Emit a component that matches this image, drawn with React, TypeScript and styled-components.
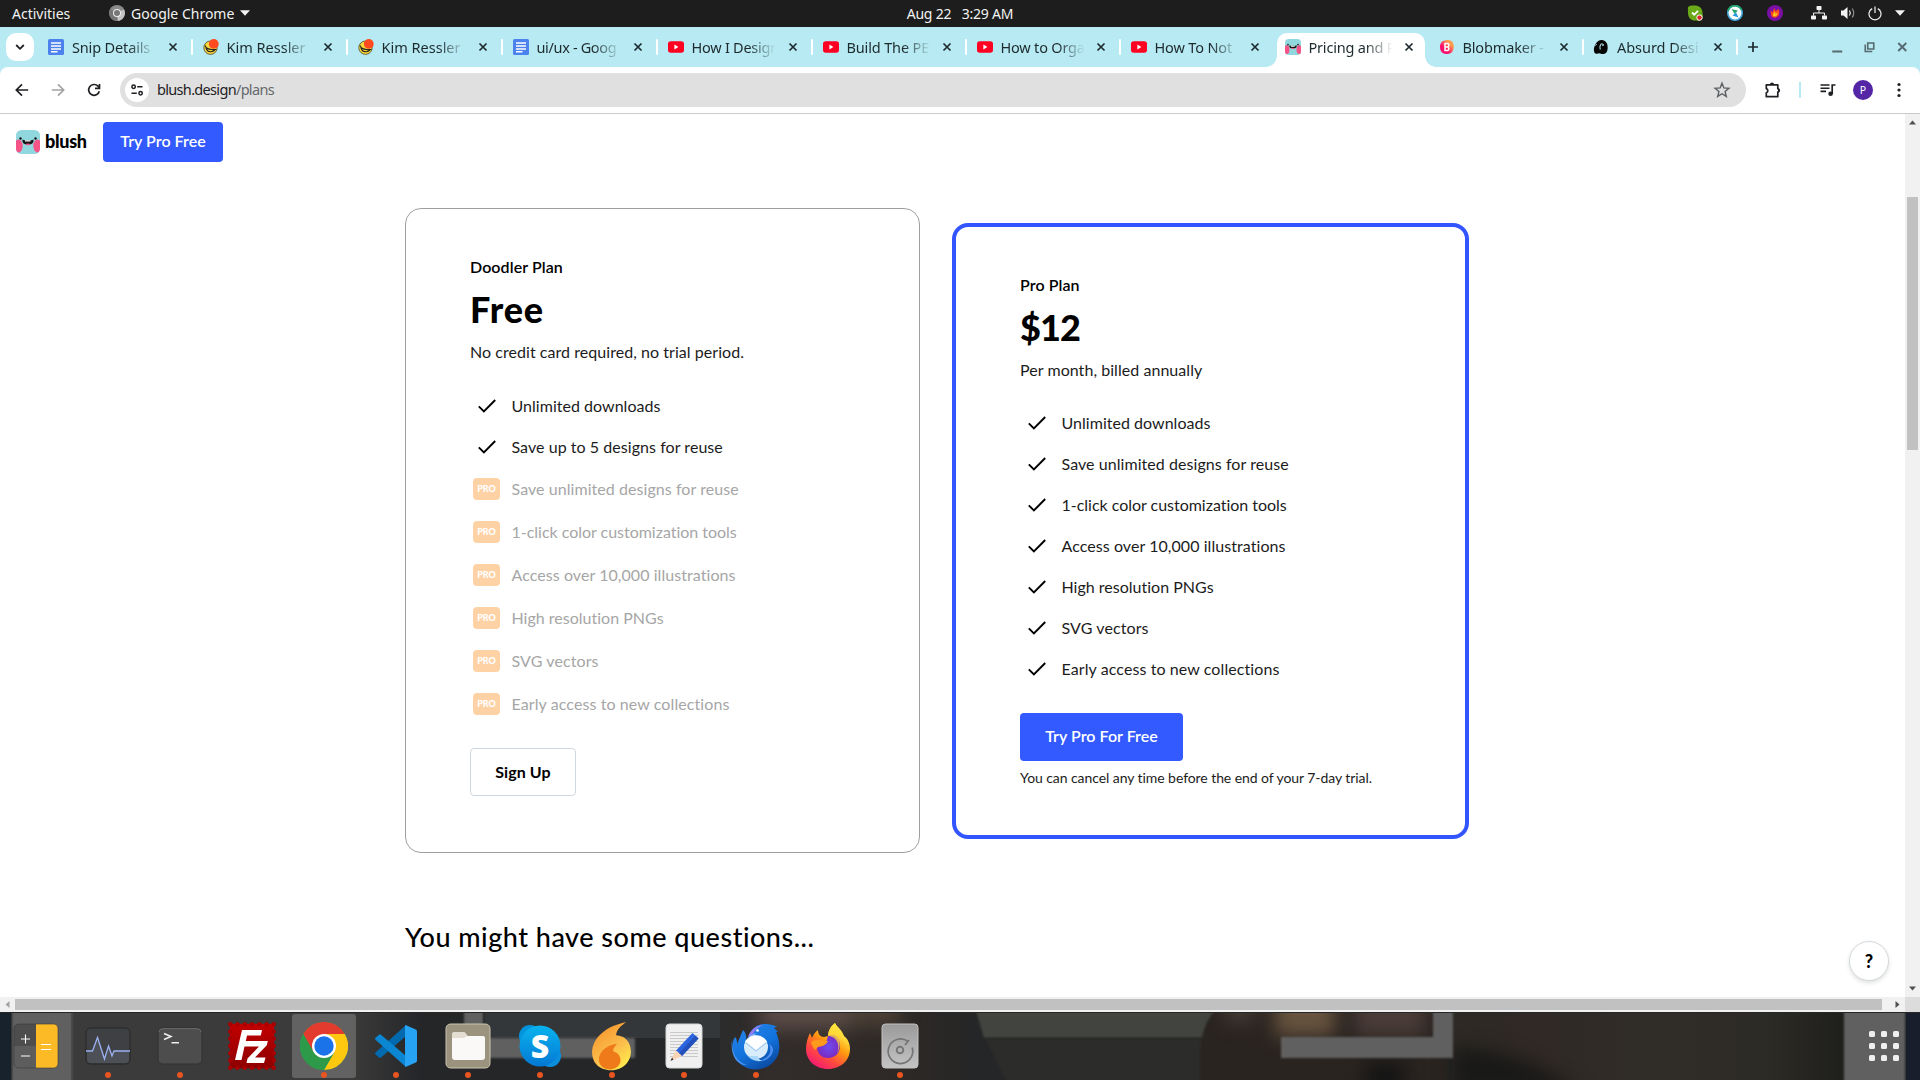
import React from "react";
import styled, { createGlobalStyle, css } from "styled-components";

const UI = `"Noto Sans", "Open Sans", sans-serif`;
const BRAND = `Lato, "Open Sans", sans-serif`;

const GlobalStyle = createGlobalStyle`
  * { box-sizing: border-box; }
  html, body { margin: 0; padding: 0; background: #fff; overflow: hidden; }
  button { font: inherit; border: 0; background: none; padding: 0; margin: 0; color: inherit; }
  svg { display: block; flex: none; }
`;

const Screen = styled.div`
  width: 1920px;
  height: 1080px;
  display: flex;
  flex-direction: column;
  overflow: hidden;
  background: #fff;
`;

/* ---------- system bar ---------- */
const SystemBar = styled.header`
  height: 27px;
  flex: none;
  display: grid;
  grid-template-columns: 1fr auto 1fr;
  align-items: center;
  padding-bottom: 1px;
  background: #1d1d1d;
  color: #f2f2f2;
  font: 400 14px/25px ${UI};
  white-space: pre;
`;
const SystemLeft = styled.div`
  display: flex;
  align-items: center;
  padding-left: 12px;
`;
const SystemLabel = styled.span<{ $w: number; $ls?: number }>`
  width: ${(p) => p.$w}px;
  letter-spacing: ${(p) => p.$ls ?? 0}px;
`;
const AppBadge = styled.span`
  display: flex;
  margin: 0 6px 0 35px;
`;
const Clock = styled.time`
  letter-spacing: -0.2px;
`;
const Tray = styled.div`
  display: flex;
  justify-content: flex-end;
  align-items: center;
  padding-right: 15px;
`;
const TraySlot = styled.span<{ $w: number }>`
  width: ${(p) => p.$w}px;
  display: flex;
  justify-content: center;
`;

/* ---------- tab strip ---------- */
const TabStrip = styled.nav`
  height: 40px;
  flex: none;
  display: flex;
  background: #b7eaf2;
  padding: 6px 0 0 6px;
`;
const TabSearch = styled.button`
  width: 28px;
  height: 28px;
  border-radius: 10px;
  background: #fff;
  display: flex;
  align-items: center;
  justify-content: center;
`;
const Tabs = styled.div`
  display: flex;
  margin-left: 3.5px;
`;
const Tab = styled.div<{ $w: number; $active?: boolean; $line?: boolean }>`
  position: relative;
  width: ${(p) => p.$w}px;
  height: 34px;
  display: flex;
  align-items: center;
  padding: 0 13px 6px 10.5px;
  font: 400 14.5px/20px ${UI};
  color: #1d2a2e;
  ${(p) =>
    p.$line &&
    css`
      &::after {
        content: "";
        position: absolute;
        right: -1px;
        top: 6px;
        width: 2px;
        height: 16px;
        border-radius: 1px;
        background: #fff;
      }
    `}
  ${(p) =>
    p.$active &&
    css`
      z-index: 1;
      background: #fff;
      border-radius: 10px 10px 0 0;
      width: 148.5px;
      margin: 0 3px;
      padding-left: 8px;
      padding-right: 10px;
      &::before,
      &::after {
        content: "";
        position: absolute;
        bottom: 0;
        width: 11px;
        height: 11px;
      }
      &::before {
        left: -11px;
        background: radial-gradient(circle at 0 0, transparent 10.5px, #fff 11px);
      }
      &::after {
        right: -11px;
        background: radial-gradient(circle at 100% 0, transparent 10.5px, #fff 11px);
      }
    `}
`;
const TabTitle = styled.span<{ $ls?: number }>`
  flex: none;
  width: 88px;
  margin-left: 8px;
  white-space: nowrap;
  letter-spacing: ${(p) => p.$ls ?? -0.15}px;
  mask-image: linear-gradient(90deg, #000 64%, transparent 95%);
`;
const TabClose = styled.span`
  display: flex;
  margin-left: auto;
`;
const NewTab = styled.button`
  margin: 0 0 6px 6px;
  width: 20px;
  display: flex;
  align-items: center;
  justify-content: center;
`;
const WindowControls = styled.div`
  display: flex;
  margin-left: auto;
  padding: 0 2px 6px 0;
  color: #566a70;
  & > svg {
    width: 32.5px;
    height: 28px;
  }
`;

/* ---------- toolbar ---------- */
const ToolbarWrap = styled.div`
  background: #b7eaf2;
  height: 47px;
  flex: none;
`;
const Toolbar = styled.div`
  height: 47px;
  background: #fff;
  border-radius: 8px 8px 0 0;
  border-bottom: 1px solid #c9cacb;
  display: flex;
  align-items: center;
  padding-left: 4px;
  color: #1f2023;
`;
const ToolSlot = styled.button<{ $dim?: boolean; $w?: number }>`
  width: ${(p) => p.$w ?? 36}px;
  display: flex;
  justify-content: center;
  color: ${(p) => (p.$dim ? "#a3a3a3" : "#1f2023")};
`;
const Omnibox = styled.div`
  width: 1626px;
  height: 34px;
  margin-left: 8px;
  border-radius: 17px;
  background: #e0e0e0;
  display: flex;
  align-items: center;
  padding: 0 15px 0 5px;
  font: 400 14.5px/20px ${UI};
  letter-spacing: -0.68px;
  color: #1f2023;
`;
const SiteInfo = styled.span`
  width: 24px;
  height: 24px;
  border-radius: 50%;
  background: #fff;
  display: flex;
  align-items: center;
  justify-content: center;
  margin-right: 8px;
`;
const UrlHost = styled.span`
  margin-top: -2px;
`;
const UrlPath = styled.span`
  color: #65696c;
  margin: -2px auto 0 0;
`;
const ToolDivider = styled.span`
  width: 2px;
  height: 16px;
  background: #b7eaf2;
  margin-right: 8px;
`;
const Avatar = styled.span`
  width: 20px;
  height: 20px;
  border-radius: 50%;
  background: #5426a6;
  color: #fff;
  font: 400 10.5px/20px ${UI};
  text-align: center;
`;

/* ---------- viewport ---------- */
const Viewport = styled.div`
  height: 898px;
  flex: none;
  display: grid;
  grid-template-columns: 1fr 15px;
  grid-template-rows: 883px 15px;
`;
const Page = styled.main`
  background: #fff;
  font-family: ${BRAND};
  color: #000;
  position: relative;
  overflow: hidden;
  font-variant-ligatures: none;
`;
const VTrack = styled.div`
  background: #f1f1f1;
  display: flex;
  flex-direction: column;
  align-items: center;
  padding: 5px 0;
`;
const VThumb = styled.div`
  width: 11px;
  height: 253px;
  margin: 71px 0 auto;
  background: #c1c1c1;
`;
const HTrack = styled.div`
  background: #f1f1f1;
  display: flex;
  align-items: center;
  padding: 0 4px;
`;
const HThumb = styled.div`
  width: 1867px;
  height: 11px;
  margin: 0 auto 0 4px;
  background: #c1c1c1;
`;
const Corner = styled.div`
  background: #dcdcdc;
`;

const SiteNav = styled.div`
  display: flex;
  align-items: center;
  padding: 8px 16px 0;
`;
const Wordmark = styled.span`
  width: 58px;
  margin: -2px 0 0 5px;
  font: 900 18px/24px ${BRAND};
  letter-spacing: -0.3px;
`;
const PrimaryButton = styled.button<{ $w: number; $h: number; $mt?: number }>`
  width: ${(p) => p.$w}px;
  height: ${(p) => p.$h}px;
  margin-top: ${(p) => p.$mt ?? 0}px;
  padding-bottom: 2px;
  border-radius: 4px;
  background: #325aff;
  color: #fff;
  font: 600 16px/24px ${BRAND};
  letter-spacing: 0.03px;
  flex: none;
`;
const OutlineButton = styled.button`
  width: 106px;
  height: 48px;
  margin-top: 23px;
  border: 1px solid #cfd8dc;
  border-radius: 4px;
  background: #fff;
  color: #000;
  font: 700 16px/22px ${BRAND};
  letter-spacing: 0.1px;
  flex: none;
`;
const Plans = styled.section`
  display: flex;
  align-items: center;
  gap: 32px;
  margin: 46px 0 0 405px;
`;
const Card = styled.article<{ $featured?: boolean }>`
  display: flex;
  flex-direction: column;
  align-items: flex-start;
  border-radius: 16px;
  background: #fff;
  ${(p) =>
    p.$featured
      ? css`
          width: 517px;
          height: 616px;
          border: 4px solid #3355ff;
          padding: 46px 64px 0;
        `
      : css`
          width: 515px;
          height: 645px;
          border: 1px solid #9f9f9f;
          padding: 46px 64px 0;
        `}
`;
const PlanName = styled.h2`
  margin: 0;
  font: 600 16px/24px ${BRAND};
  letter-spacing: 0.08px;
`;
const Price = styled.div<{ $ls?: number }>`
  margin: 8px 0 -1px;
  font: 900 36px/44px ${BRAND};
  letter-spacing: ${(p) => p.$ls ?? 0}px;
`;
const Terms = styled.p`
  margin: 10px 0 0;
  font: 400 16px/24px ${BRAND};
  letter-spacing: 0.05px;
  color: #1c1c1c;
  white-space: nowrap;
`;
const Features = styled.ul`
  list-style: none;
  margin: 21px 0 0;
  padding: 0;
`;
const Feature = styled.li<{ $locked?: boolean }>`
  height: ${(p) => (p.$locked ? 43 : 41)}px;
  display: grid;
  grid-template-columns: 41.5px auto;
  align-items: center;
  font: 400 16px/24px ${BRAND};
  color: ${(p) => (p.$locked ? "#a6a6a6" : "#1c1c1c")};
  white-space: nowrap;
`;
const FeatureText = styled.span<{ $ls: number }>`
  letter-spacing: ${(p) => p.$ls}px;
`;
const CheckSlot = styled.span`
  padding-left: 8px;
`;
const ProBadge = styled.span`
  width: 27px;
  height: 22px;
  margin-left: 3px;
  border-radius: 4px;
  background: #ffd2a6;
  color: #fff;
  font: 900 9px/21px ${BRAND};
  text-align: center;
`;
const Note = styled.p`
  margin: 7px 0 0;
  font: 400 14px/20px ${BRAND};
  letter-spacing: -0.07px;
  color: #1c1c1c;
  white-space: nowrap;
`;
const Questions = styled.h2`
  margin: 66px 0 0 405px;
  font: 500 27px/36px ${BRAND};
  letter-spacing: 0.5px;
`;
const Help = styled.button`
  position: absolute;
  right: 16px;
  bottom: 16px;
  width: 40px;
  height: 40px;
  border: 1px solid #d3d9dd;
  border-radius: 50%;
  background: #fff;
  box-shadow: 0 2px 4px rgba(0, 0, 0, 0.12);
  font: 900 18px/38px ${BRAND};
  text-align: center;
`;

/* ---------- dock ---------- */
const Dock = styled.footer`
  position: relative;
  height: 68px;
  flex: none;
  display: flex;
  background: #2a2a29;
  overflow: hidden;
`;
const Wallpaper = styled.svg`
  position: absolute;
  left: 0;
  top: 0;
`;
const DockItem = styled.div<{ $active?: boolean; $running?: boolean }>`
  position: relative;
  width: 64px;
  height: 64px;
  margin: 2px 4px;
  border-radius: 3px;
  display: flex;
  align-items: center;
  justify-content: center;
  background: ${(p) => (p.$active ? "rgba(255,255,255,.2)" : "transparent")};
  ${(p) =>
    p.$running &&
    css`
      &::after {
        content: "";
        position: absolute;
        left: 29px;
        bottom: 0;
        width: 6px;
        height: 6px;
        border-radius: 50%;
        background: #e95420;
      }
    `}
`;
const AppsButton = styled.div`
  position: relative;
  display: grid;
  grid-template-columns: repeat(3, 6px);
  grid-auto-rows: 6px;
  gap: 6px;
  margin: 19px 21px 0 auto;
`;
const AppsDot = styled.i`
  border-radius: 1.5px;
  background: #efefef;
`;

/* ---------- icons ---------- */
const DocsIcon = () => (
  <svg width="16" height="16" viewBox="0 0 16 16">
    <rect width="16" height="16" rx="1.5" fill="#4c82ee" />
    <path d="M3 4h10M3 7h10M3 10h10M3 12.7h6.5" stroke="#fff" strokeWidth="1.6" />
  </svg>
);
const KimIcon = () => (
  <svg width="16" height="16" viewBox="0 0 16 16">
    <circle cx="7.5" cy="8.7" r="6.700" fill="#f7d83c" stroke="#3a3222" strokeWidth=".7" />
    <path d="M2 6.500c1 3.500 6 4.500 11.500 4M4 11.500c2.500 2 6 1.500 8-.5M3 8c0 2 1.500 4 3.500 4.500" fill="none" stroke="#2b2622" strokeWidth="1.100" />
    <circle cx="10.800" cy="4.900" r="4.900" fill="#ff4b1f" />
  </svg>
);
const YouTubeIcon = () => (
  <svg width="16" height="16" viewBox="0 0 16 16">
    <rect y="2.200" width="16" height="11.600" rx="2.800" fill="#ff0022" />
    <path d="M6.400 5.600v4.800l4-2.400z" fill="#fff" />
  </svg>
);
const BlushIcon = ({ size = 16 }: { size?: number }) => (
  <svg width={size} height={size} viewBox="0 0 24 24">
    <defs>
      <clipPath id={`face${size}`}>
        <rect width="24" height="24" rx="5.500" />
      </clipPath>
    </defs>
    <g clipPath={`url(#face${size})`}>
      <rect width="24" height="24" fill="#91d8de" />
      <ellipse cx="2.500" cy="16" rx="4.200" ry="6.500" fill="#f65487" />
      <ellipse cx="21.500" cy="16" rx="4.200" ry="6.500" fill="#f65487" />
      <path d="M6.500 9.500c1.800.8 3 1 5.500.700 2.500.3 3.700.1 5.500-.7.400 3.200-1 5-5.500 5s-5.900-1.800-5.500-5z" fill="#141414" />
      <path d="M9 10.300h5.500v1.300H9z" fill="#fff" />
      <path d="M9.500 14.200c1.300-.9 3.700-.9 5 0-.6 1.300-4.400 1.300-5 0z" fill="#f65487" />
      <circle cx="4.500" cy="8.500" r="1.200" fill="#141414" />
      <circle cx="19.500" cy="8.500" r="1.200" fill="#141414" />
    </g>
  </svg>
);
const BlobIcon = () => (
  <svg width="16" height="16" viewBox="0 0 16 16">
    <defs>
      <linearGradient id="blob" x1="0" y1="1" x2="1" y2="0">
        <stop offset=".35" stopColor="#fb0f6c" />
        <stop offset=".75" stopColor="#ff9f4d" />
      </linearGradient>
    </defs>
    <path d="M1 8C1 3.500 3.500 1.500 7 1.200 12 .6 14.800 3 14.800 7.500 14.800 12 12.500 15 8 15S1 12.500 1 8z" fill="url(#blob)" />
    <path d="M6 4.500v7h2.600a1.900 1.900 0 0 0 0-3.600H6h2.300a1.700 1.700 0 0 0 0-3.400z" fill="none" stroke="#fff" strokeWidth="1.500" />
  </svg>
);
const AbsurdIcon = () => (
  <svg width="16" height="16" viewBox="0 0 16 16">
    <path d="M2 6C4 2 7 .5 10 1.200c4 1 5 5 4.600 8.800-.3 3.500-2 5-4.600 5-2 0-2.500-.8-3.500-.8S4 15 2.500 14.500C.5 13.500.5 9 2 6z" fill="#050505" />
    <path d="M7.300 10.500C6.200 7.500 7.500 4.500 9.500 4.800" fill="none" stroke="#b7eaf2" strokeWidth="1.100" />
    <circle cx="10" cy="6" r=".9" fill="#b7eaf2" />
    <path d="M1.500 7l2.500-2" stroke="#b7eaf2" strokeWidth=".8" />
  </svg>
);
const CloseIcon = () => (
  <svg width="12" height="12" viewBox="0 0 12 12">
    <path d="M2.500 2.500l7 7M9.500 2.500l-7 7" stroke="#1d2a2e" strokeWidth="1.700" />
  </svg>
);
const Check = () => (
  <svg width="18" height="14" viewBox="0 0 18 14">
    <path d="M.8 7.300l5.100 5.200L17.200 1" fill="none" stroke="#000" strokeWidth="1.900" />
  </svg>
);
const ArrowIcon = ({ flip }: { flip?: boolean }) => (
  <svg width="20" height="20" viewBox="0 0 20 20" transform={flip ? "rotate(180)" : undefined}>
    <path d="M16.200 10H4.500M10 4.300L4.300 10l5.700 5.700" fill="none" stroke="currentColor" strokeWidth="1.700" />
  </svg>
);
const ReloadIcon = () => (
  <svg width="20" height="20" viewBox="0 0 20 20">
    <path d="M15.300 11.200A5.400 5.400 0 1 1 14 6.200l1.200 1.300" fill="none" stroke="currentColor" strokeWidth="1.700" />
    <path d="M15.500 4v4.400H11" fill="none" stroke="currentColor" strokeWidth="1.700" />
  </svg>
);
const TuneIcon = () => (
  <svg width="14" height="14" viewBox="0 0 14 14" fill="none" stroke="#1f2023" strokeWidth="1.500">
    <circle cx="3.600" cy="3.700" r="1.700" />
    <path d="M7.200 3.700h5.300M1.500 10.300h5.300" />
    <circle cx="10.600" cy="10.300" r="1.700" />
  </svg>
);
const StarIcon = () => (
  <svg width="18" height="18" viewBox="0 0 24 24">
    <path d="M12 3l2.500 6.200 6.700.5-5.100 4.300 1.600 6.500L12 17l-5.700 3.500 1.600-6.500-5.100-4.300 6.700-.5z" fill="none" stroke="#5c5f62" strokeWidth="1.900" />
  </svg>
);
const ExtensionIcon = () => (
  <svg width="20" height="20" viewBox="0 0 20 20">
    <path d="M3.300 4.800h11.500v4a1.700 1.700 0 0 1 0 3.200v4.700H3.300v-3.900a2.200 2.200 0 0 0 0-4.200z" fill="none" stroke="currentColor" strokeWidth="1.700" strokeLinejoin="round" />
    <path d="M6.900 4.500a2.100 2.100 0 0 1 4.200 0zM15 8.300a2.100 2.100 0 0 1 0 4.200z" fill="currentColor" />
  </svg>
);
const MediaIcon = () => (
  <svg width="20" height="20" viewBox="0 0 20 20">
    <path d="M2.500 5h9M2.500 8.200h9M2.500 11.400h5.500" stroke="currentColor" strokeWidth="1.600" />
    <path d="M17.500 5h-3.300v9" fill="none" stroke="currentColor" strokeWidth="1.700" />
    <circle cx="12.600" cy="13.700" r="2.300" fill="currentColor" />
  </svg>
);
const DotsIcon = () => (
  <svg width="20" height="20" viewBox="0 0 20 20" fill="currentColor">
    <circle cx="10" cy="4.500" r="1.600" />
    <circle cx="10" cy="10" r="1.600" />
    <circle cx="10" cy="15.500" r="1.600" />
  </svg>
);
const Caret = ({ w = 10 }: { w?: number }) => (
  <svg width={w} height="6" viewBox="0 0 10 6">
    <path d="M0 .3h10L5 5.800z" fill="#f2f2f2" />
  </svg>
);
const ScrollArrow = ({ turn, light }: { turn: number; light?: boolean }) => (
  <svg width="7" height="7" viewBox="0 0 7 7" transform={`rotate(${turn})`}>
    <path d="M0 5.500h7L3.500 1.500z" fill={light ? "#a3a3a3" : "#505050"} />
  </svg>
);

const GreyChrome = () => (
  <svg width="16" height="16" viewBox="0 0 16 16">
    <circle cx="8" cy="8" r="8" fill="#8b8b8b" />
    <path d="M8 8L15 4.500A8 8 0 0 1 9 16z" fill="#c4c4c4" />
    <path d="M8 8l-6.500-4A8 8 0 0 0 8 16z" fill="#757575" />
    <circle cx="8" cy="8" r="4" fill="#eee" />
    <circle cx="8" cy="8" r="3" fill="#777" />
  </svg>
);
const SkypeTray = () => (
  <svg width="16" height="16" viewBox="0 0 16 16">
    <path d="M1 5C0 1.500 3 0 6 .6c5-.8 10 2 9.500 8C17 13 13 17 9.500 15.500 3 16 .5 12 1 5z" fill="#6aa917" />
    <path d="M5 7.500l2.200 2.200L11 5.800" fill="none" stroke="#fff" strokeWidth="1.800" />
    <circle cx="12.500" cy="12.600" r="2.700" fill="#d9222a" stroke="#fff" strokeWidth="1" />
  </svg>
);
const SyncTray = () => (
  <svg width="16" height="16" viewBox="0 0 16 16">
    <circle cx="8" cy="8" r="7.200" fill="#fff" stroke="#45a9dc" strokeWidth="1.600" />
    <path d="M1 6a7.200 7.200 0 0 1 13.500-1" fill="none" stroke="#23a566" strokeWidth="1.700" />
    <path d="M4.500 4l6.500 1.800-3.500 3z" fill="#23a566" />
    <path d="M11.500 12.500L5.500 10.500 9 7.200z" fill="#2b9bd8" />
  </svg>
);
const FlameTray = () => (
  <svg width="16" height="16" viewBox="0 0 16 16">
    <circle cx="8" cy="8" r="8" fill="#7a0fa5" />
    <path d="M3.500 5.500c1.200.5 1.500 1.200 1.800 2L7.500 3l.8 3L12 4c0 3 1 4-.5 6.500C10 13 6 13.500 4.500 11c-1-1.700-.2-3-1-5.500z" fill="#ff4a1c" />
    <path d="M6 11c-.5-2 1-3 1.500-5 .5 1.500 1 2 1.200 3L10.500 7c.3 3-1 5.500-4.500 4z" fill="#ffc21c" />
  </svg>
);
const NetworkIcon = () => (
  <svg width="16" height="14" viewBox="0 0 16 14" fill="#f2f2f2">
    <rect x="5.500" width="5" height="4" rx=".8" />
    <rect y="9.500" width="5" height="4" rx=".8" />
    <rect x="11" y="9.500" width="5" height="4" rx=".8" />
    <path d="M8 4v3M2.500 9.500V7h11v2.500" fill="none" stroke="#f2f2f2" strokeWidth="1" />
  </svg>
);
const VolumeIcon = () => (
  <svg width="16" height="14" viewBox="0 0 16 14">
    <path d="M1 4.500h2.500L7.500 1v12l-4-3.500H1z" fill="#f2f2f2" />
    <path d="M9.500 4.500q1.600 2.500 0 5" fill="none" stroke="#f2f2f2" strokeWidth="1.200" />
    <path d="M12.200 2.500q3 4.500 0 9" fill="none" stroke="#8d8d8d" strokeWidth="1.200" />
  </svg>
);
const PowerIcon = () => (
  <svg width="14" height="15" viewBox="0 0 14 15" fill="none" stroke="#f2f2f2" strokeWidth="1.200">
    <path d="M4.200 2.600a6 6 0 1 0 5.600 0M7 .5v6.500" />
  </svg>
);

/* dock application icons */
const Calculator = () => (
  <svg width="46" height="46" viewBox="0 0 46 46">
    <defs>
      <clipPath id="calc"><rect x="1" y="1" width="44" height="44" rx="4.500" /></clipPath>
    </defs>
    <g clipPath="url(#calc)">
      <rect width="23" height="23" fill="#4d4d4d" />
      <rect y="23" width="23" height="23" fill="#5d5d5d" />
      <rect x="23" width="23" height="46" fill="#fcbb26" />
    </g>
    <rect x="1" y="1" width="44" height="44" rx="4.500" fill="none" stroke="#3a3a3a" strokeOpacity=".6" />
    <path d="M8 16h9M12.500 11.500v9M8 33h9M28 21.500h10M28 26.500h10" stroke="#fff" strokeWidth="1.100" />
  </svg>
);
const Monitor = () => (
  <svg width="46" height="38" viewBox="0 0 46 38">
    <rect x="1" y="1" width="44" height="36" rx="4.500" fill="#3f4043" stroke="#262626" />
    <path d="M2 24h5l6-14 7 22 4-14 4 10 2-4h14v8q0 4-4 4H6q-4 0-4-4z" fill="#6b7080" fillOpacity=".35" />
    <path d="M1 24h6.500L12.500 10.500 19.500 32l4-13 3.500 10 2-5H45" fill="none" stroke="#9ab0f0" strokeWidth="1.300" />
  </svg>
);
const Terminal = () => (
  <svg width="46" height="38" viewBox="0 0 46 38">
    <rect x="1" y="1" width="44" height="36" rx="4.500" fill="#4d4d4d" stroke="#303030" />
    <path d="M2 5q0-3.300 4-3.300h34q4 0 4 3.300" fill="none" stroke="#6d6d6d" />
    <path d="M7 6.500l7 3-7 3M14.500 15.800H22" fill="none" stroke="#efefef" strokeWidth="1.500" />
  </svg>
);
const FileZilla = () => (
  <svg width="48" height="48" viewBox="0 0 48 48">
    <defs>
      <linearGradient id="fz" x1="0" y1="0" x2="0" y2="1">
        <stop stopColor="#c30000" /><stop offset="1" stopColor="#8c0000" />
      </linearGradient>
    </defs>
    <rect x="1.800" y="1.800" width="44.400" height="44.400" fill="url(#fz)" />
    <rect x="2.200" y="2.200" width="43.600" height="43.600" fill="none" stroke="#a80000" strokeWidth="4.400" strokeLinecap="round" strokeDasharray="0.100 7.167" />
    <path d="M14 8h20l-1.200 5.500H19l-1.200 5.500h22l-1 4.300L27 35.500h10.500L36 41H18.500l1-4.500L31 24.500H16.500L13.500 38H7z" fill="#fff" />
  </svg>
);
const Chrome = () => (
  <svg width="48" height="48" viewBox="0 0 48 48">
    <circle cx="24" cy="24" r="24" fill="#33a14f" />
    <path d="M3.200 12A24 24 0 0 1 44.800 12H24L13.600 30z" fill="#e33b2e" />
    <path d="M44.800 12A24 24 0 0 1 24 48L34.400 30 24 12z" fill="#fdc80f" />
    <path d="M3.200 12L13.600 30 24 36 34.400 30 24 48A24 24 0 0 1 3.200 12z" fill="#2c9a48" />
    <circle cx="24" cy="24" r="12" fill="#fff" />
    <circle cx="24" cy="24" r="9.700" fill="#1a73e8" />
  </svg>
);
const VsCode = () => (
  <svg width="44" height="44" viewBox="0 0 44 44">
    <path d="M32 1v11L7 33.500q-1 .8-2 0L1.500 30.500q-1.200-1 0-2z" fill="#0169ad" />
    <path d="M32 43V32L7 10.700q-1-.8-2 0L1.500 13.700q-1.200 1 0 2z" fill="#0a86d2" />
    <path d="M31.500 1l10.300 4.500q1.200.6 1.200 2v29q0 1.400-1.200 2L31.500 43q-.5-.4-.5-1V2q0-.6.500-1z" fill="#27a3f3" />
  </svg>
);
const Files = () => (
  <svg width="46" height="46" viewBox="0 0 46 46">
    <rect x="1" y="1" width="44" height="44" rx="4.500" fill="#9b937d" stroke="#cbc4b2" />
    <path d="M7 12q0-3 3-3h8q2 0 3 2l1.500 2H38q2 0 2 2v19q0 3-3 3H10q-3 0-3-3z" fill="#faf9f8" />
    <path d="M7 14v-2q0-3 3-3h8q2 0 3 2l1 2q-2 2-4 2H7z" fill="#e3ddd2" />
  </svg>
);
const SkypeMark = styled.span`
  position: relative;
  width: 44px;
  height: 44px;
  color: #fff;
  font: 700 32px/43px ${UI};
  text-align: center;
  & > svg { position: absolute; inset: 0; }
  & > b { position: relative; }
`;
const Skype = () => (
  <SkypeMark>
    <svg width="44" height="44" viewBox="0 0 44 44">
      <defs>
        <linearGradient id="sky" x1="0" y1="0" x2="0" y2="1">
          <stop stopColor="#09b3ee" /><stop offset="1" stopColor="#0478d4" />
        </linearGradient>
      </defs>
      <circle cx="12" cy="12" r="11" fill="#0494dc" />
      <circle cx="32" cy="32" r="11" fill="#0a8fdd" />
      <circle cx="22" cy="22" r="20.500" fill="url(#sky)" />
    </svg>
    <b>S</b>
  </SkypeMark>
);
const Flame = () => (
  <svg width="42" height="50" viewBox="0 0 42 50">
    <defs>
      <linearGradient id="fl" x1=".2" y1="0" x2=".8" y2="1">
        <stop stopColor="#f7902a" /><stop offset=".6" stopColor="#fcc04c" /><stop offset="1" stopColor="#fff04a" />
      </linearGradient>
    </defs>
    <path d="M35 1C25 4 19 5 11 12-1 22-1 36 5 43c7 8 23 9 31-1 7-9 4-22-4-26-3-1.500-5-1-7-2 1-6 5-9 10-13z" fill="url(#fl)" />
    <path d="M26 23C18 23 7 30 8 40c1 8 12 11 18 6 5-4 4-10 1-13-2-2-4-2-5-3 0-3 2-5 4-7z" fill="#ee7a1a" />
  </svg>
);
const Editor = () => (
  <svg width="38" height="46" viewBox="0 0 38 46">
    <rect x="1" y="1" width="36" height="44" rx="3.500" fill="#f0f0f0" stroke="#d6d6d6" />
    <path d="M5 9.500h28M5 12.500h28M5 15.500h28M5 18.500h28M5 21.500h28M5 24.500h28M5 27.500h28M5 30.500h28M5 33.500h28" stroke="#c4c4c4" strokeWidth=".9" />
    <path d="M27.500 10l6 5.500L17 33l-6-5.500z" fill="#2c63df" />
    <path d="M30.500 12.700l3 2.800L17 33l-3-2.800z" fill="#2450bb" />
    <path d="M11 27.500l6 5.500-11.500 5z" fill="#f8d3b4" />
    <path d="M7 34.500l1.500 2-3 1.500z" fill="#333" />
  </svg>
);
const Thunderbird = () => (
  <svg width="50" height="48" viewBox="0 0 50 48">
    <defs>
      <linearGradient id="tb" x1="0" y1="0" x2=".6" y2="1">
        <stop stopColor="#2a86ea" /><stop offset=".6" stopColor="#1273dd" /><stop offset="1" stopColor="#0b4da6" />
      </linearGradient>
    </defs>
    <path d="M4 15c2 2 2 4 2 7l6-14c3 3 4 7 3 11l4-7c2-6 8-10 15-10 6 0 9 2 12 2l-3 2 4 4-2 0c6 14 4 26-6 33-12 8-28 5-34-7C1 29 0 21 4 15z" fill="url(#tb)" />
    <path d="M17 15c2-7 8-12 15-12-6 3-8 5-11 11z" fill="#8d7df0" />
    <path d="M18 14l7-3-3 6z" fill="#7fb0f7" />
    <circle cx="26.500" cy="8.500" r="1.300" fill="#fff" />
    <path d="M1 18c0 12 4 22 15 25C6 44-1 33 1 18z" fill="#4596f5" />
    <path d="M38 22c4 8-1 16-13 17 8 2 17-4 17-11 0-3-2-5-4-6z" fill="#4d8ff0" />
    <circle cx="25" cy="25" r="12" fill="#d8ecfc" />
    <path d="M14 20l11 9 11-9c-4-8-18-8-22 0z" fill="#fff" />
    <path d="M14.500 20.500L25 29l10.500-8.500" fill="none" stroke="#a6cdf2" strokeWidth="1.200" />
    <path d="M17 34c4 5 9 5 14 5-4-2-4-4-4-5z" fill="#a9d8fb" />
  </svg>
);
const Firefox = () => (
  <svg width="46" height="48" viewBox="0 0 46 48">
    <defs>
      <linearGradient id="ff" x1=".85" y1="0" x2=".2" y2="1">
        <stop offset=".15" stopColor="#fff04c" /><stop offset=".45" stopColor="#ff980e" /><stop offset=".7" stopColor="#ff4a3f" /><stop offset="1" stopColor="#f2127d" />
      </linearGradient>
      <radialGradient id="ffc"><stop stopColor="#6d4df2" /><stop offset="1" stopColor="#7a2bc0" /></radialGradient>
    </defs>
    <path d="M30 1c2 4 7 7 9 13 4 3 6 8 6 13 0 11-9 20-22 20S1 38 1 27C1 20 3 15 5 11l2 5c1-3 3-6 6-8 0 4 2 7 6 7l4-1c0-5 3-10 7-13z" fill="url(#ff)" />
    <path d="M23 14c7-3 12 2 12 10 0 7-5 12-12 12s-11-5-11-11c5 0 8-2 9-4z" fill="url(#ffc)" />
    <path d="M6 20c6-4 10-1 17-1-2 4-5 5-9 5l-4 4c-2-2-3-5-4-8z" fill="#ff9a1c" />
    <path d="M30 1c3 6 10 9 10 20-2-5-5-7-8-8 3 5 4 12 0 18 4-8-1-17-9-17 0-5 3-10 7-13z" fill="#ffdb38" fillOpacity=".75" />
  </svg>
);
const Disks = () => (
  <svg width="38" height="46" viewBox="0 0 38 46">
    <defs>
      <linearGradient id="dk" x1="0" y1="0" x2="0" y2="1"><stop stopColor="#9a9a9a" /><stop offset="1" stopColor="#c4c4c4" /></linearGradient>
    </defs>
    <rect x="1" y="1" width="36" height="44" rx="3.500" fill="url(#dk)" stroke="#c2c2c2" />
    <path d="M27 18.500a12.300 12.300 0 1 0 4.200 6" fill="none" stroke="#757575" strokeWidth="1.700" />
    <path d="M24 22l4-5" stroke="#757575" strokeWidth="1.700" />
    <circle cx="19" cy="27" r="3.300" fill="none" stroke="#757575" strokeWidth="1.900" />
  </svg>
);

const Backdrop = () => (
  <Wallpaper width="1920" height="68" viewBox="0 0 1920 68">
    <defs>
      <filter id="soft" filterUnits="userSpaceOnUse" x="0" y="-60" width="1920" height="190" colorInterpolationFilters="sRGB"><feGaussianBlur stdDeviation="9" /></filter>
      <filter id="edge" filterUnits="userSpaceOnUse" x="0" y="-20" width="1920" height="110" colorInterpolationFilters="sRGB"><feGaussianBlur stdDeviation="1" /></filter>
      <linearGradient id="fade"><stop stopColor="#3c3b3a" /><stop offset="1" stopColor="#242629" /></linearGradient>
      <linearGradient id="brown">
        <stop stopColor="#2b2c2c" /><stop offset=".2" stopColor="#322c2a" /><stop offset=".7" stopColor="#2e2926" /><stop offset="1" stopColor="#262626" />
      </linearGradient>
      <linearGradient id="warm">
        <stop stopColor="#2d2924" /><stop offset=".2" stopColor="#302925" /><stop offset=".55" stopColor="#302d29" /><stop offset=".8" stopColor="#2d2b26" /><stop offset="1" stopColor="#1f1f1c" />
      </linearGradient>
    </defs>
    <rect width="1920" height="68" fill="#252627" />
    <rect x="72" width="290" height="68" fill="#3b3b3b" />
    <rect x="350" width="70" height="68" fill="url(#fade)" />
    <rect x="485" width="240" height="26" fill="#34373a" />
    <rect x="720" width="250" height="68" fill="url(#brown)" />
    <g filter="url(#soft)">
      <rect x="760" y="-20" width="90" height="38" fill="#5a4a45" />
      <rect x="850" y="-20" width="50" height="34" fill="#4c4036" />
    </g>
    <path d="M975-4h250v30H984z" fill="#42443f" filter="url(#edge)" />
    <path d="M985 26h220v46h-198z" fill="#2c2c2a" filter="url(#edge)" />
    <path d="M1218-4h230v76h-248V40q2-30 18-44z" fill="#2a2420" filter="url(#edge)" />
    <g filter="url(#soft)">
      <rect x="1275" y="-20" width="60" height="44" fill="#67533f" />
      <rect x="1355" y="-20" width="70" height="44" fill="#4a3c38" />
      <rect x="1225" y="-20" width="30" height="30" fill="#453a36" />
      <rect x="1365" y="50" width="40" height="30" fill="#151515" />
    </g>
    <rect x="1452" width="392" height="68" fill="url(#warm)" />
    <path d="M1452 36q60-4 130 44h-130z" fill="#191918" filter="url(#soft)" />
    <g fill="#606060" filter="url(#edge)">
      <rect x="12" y="-4" width="60" height="76" />
      <path d="M464-4h19v30h152v20H464z" />
      <path d="M1433-4h20v50h-172V25h152z" />
      <rect x="1844" y="-4" width="61" height="76" />
    </g>
    <rect width="11" height="68" fill="#18222d" />
    <rect x="1906" width="14" height="68" fill="#181e2b" />
    <rect width="1920" height="1" fill="#262626" />
  </Wallpaper>
);

const tabs: { title: string; icon: React.FC; w: number; ls?: number; active?: boolean; line?: boolean }[] = [
  { title: "Snip Details", icon: DocsIcon, w: 154.5, line: true },
  { title: "Kim Ressler -", icon: KimIcon, w: 155, line: true, ls: 0 },
  { title: "Kim Ressler -", icon: KimIcon, w: 155, line: true, ls: 0 },
  { title: "ui/ux - Goog", icon: DocsIcon, w: 155, line: true, ls: -0.35 },
  { title: "How I Desigr", icon: YouTubeIcon, w: 155, line: true, ls: -0.25 },
  { title: "Build The PE", icon: YouTubeIcon, w: 154, line: true },
  { title: "How to Orga", icon: YouTubeIcon, w: 154, line: true, ls: -0.2 },
  { title: "How To Not", icon: YouTubeIcon, w: 153.5 },
  { title: "Pricing and P", icon: BlushIcon, w: 148.5, active: true, ls: -0.2 },
  { title: "Blobmaker -", icon: BlobIcon, w: 154.5, line: true },
  { title: "Absurd Desi", icon: AbsurdIcon, w: 154.5, line: true, ls: -0.05 },
];

const freeFeatures: [string, boolean, number][] = [
  ["Unlimited downloads", false, 0.03],
  ["Save up to 5 designs for reuse", false, 0.05],
  ["Save unlimited designs for reuse", true, 0.06],
  ["1-click color customization tools", true, -0.02],
  ["Access over 10,000 illustrations", true, 0.06],
  ["High resolution PNGs", true, 0.01],
  ["SVG vectors", true, 0.1],
  ["Early access to new collections", true, 0.09],
];
const proFeatures = freeFeatures.filter((_, i) => i !== 1);

const dockApps: { icon: React.FC; running?: boolean; active?: boolean }[] = [
  { icon: Calculator },
  { icon: Monitor, running: true },
  { icon: Terminal, running: true },
  { icon: FileZilla },
  { icon: Chrome, running: true, active: true },
  { icon: VsCode, running: true },
  { icon: Files, running: true },
  { icon: Skype, running: true },
  { icon: Flame, running: true },
  { icon: Editor, running: true },
  { icon: Thunderbird, running: true },
  { icon: Firefox },
  { icon: Disks, running: true },
];

export default function App() {
  return (
    <Screen>
      <GlobalStyle />
      <SystemBar>
        <SystemLeft>
          <SystemLabel $w={62}>Activities</SystemLabel>
          <AppBadge><GreyChrome /></AppBadge>
          <SystemLabel $w={109}>Google Chrome</SystemLabel>
          <Caret />
        </SystemLeft>
        <Clock>{"Aug 22   3:29 AM"}</Clock>
        <Tray>
          <TraySlot $w={40}><SkypeTray /></TraySlot>
          <TraySlot $w={40}><SyncTray /></TraySlot>
          <TraySlot $w={40}><FlameTray /></TraySlot>
          <TraySlot $w={47}><NetworkIcon /></TraySlot>
          <TraySlot $w={12}><VolumeIcon /></TraySlot>
          <TraySlot $w={41}><PowerIcon /></TraySlot>
          <Caret />
        </Tray>
      </SystemBar>

      <TabStrip>
        <TabSearch>
          <svg width="10" height="8" viewBox="0 0 10 8"><path d="M1.200 2l3.800 3.800L8.800 2" fill="none" stroke="#1f2023" strokeWidth="1.800" /></svg>
        </TabSearch>
        <Tabs>
          {tabs.map((t, i) => (
            <Tab key={i} $w={t.w} $active={t.active} $line={t.line}>
              <t.icon />
              <TabTitle $ls={t.ls}>{t.title}</TabTitle>
              <TabClose><CloseIcon /></TabClose>
            </Tab>
          ))}
        </Tabs>
        <NewTab>
          <svg width="12" height="12" viewBox="0 0 12 12"><path d="M6 1v10M1 6h10" stroke="#1d2a2e" strokeWidth="1.700" /></svg>
        </NewTab>
        <WindowControls>
          <svg viewBox="0 0 32 28"><path d="M11 18.500h10" stroke="currentColor" strokeWidth="2" /></svg>
          <svg viewBox="0 0 32 28"><path d="M14.500 10h6v6h-6zM12 11.500v7h7" fill="none" stroke="currentColor" strokeWidth="1.600" /></svg>
          <svg viewBox="0 0 32 28"><path d="M12 10l8 8M20 10l-8 8" stroke="currentColor" strokeWidth="1.900" /></svg>
        </WindowControls>
      </TabStrip>

      <ToolbarWrap>
        <Toolbar>
          <ToolSlot><ArrowIcon /></ToolSlot>
          <ToolSlot $dim><ArrowIcon flip /></ToolSlot>
          <ToolSlot><ReloadIcon /></ToolSlot>
          <Omnibox>
            <SiteInfo><TuneIcon /></SiteInfo>
            <UrlHost>blush.design</UrlHost>
            <UrlPath>/plans</UrlPath>
            <StarIcon />
          </Omnibox>
          <ToolSlot $w={53}><ExtensionIcon /></ToolSlot>
          <ToolDivider />
          <ToolSlot $w={37}><MediaIcon /></ToolSlot>
          <ToolSlot $w={34}><Avatar>P</Avatar></ToolSlot>
          <ToolSlot $w={38}><DotsIcon /></ToolSlot>
        </Toolbar>
      </ToolbarWrap>

      <Viewport>
        <Page>
          <SiteNav>
            <BlushIcon size={24} />
            <Wordmark>blush</Wordmark>
            <PrimaryButton $w={120} $h={40}>Try Pro Free</PrimaryButton>
          </SiteNav>
          <Plans>
            <Card>
              <PlanName>Doodler Plan</PlanName>
              <Price $ls={0.8}>Free</Price>
              <Terms>No credit card required, no trial period.</Terms>
              <Features>
                {freeFeatures.map(([text, locked, ls]) => (
                  <Feature key={text} $locked={locked}>
                    {locked ? <ProBadge>PRO</ProBadge> : <CheckSlot><Check /></CheckSlot>}
                    <FeatureText $ls={ls}>{text}</FeatureText>
                  </Feature>
                ))}
              </Features>
              <OutlineButton>Sign Up</OutlineButton>
            </Card>
            <Card $featured>
              <PlanName>Pro Plan</PlanName>
              <Price $ls={-0.9}>$12</Price>
              <Terms>Per month, billed annually</Terms>
              <Features>
                {proFeatures.map(([text, , ls]) => (
                  <Feature key={text}>
                    <CheckSlot><Check /></CheckSlot>
                    <FeatureText $ls={ls}>{text}</FeatureText>
                  </Feature>
                ))}
              </Features>
              <PrimaryButton $w={163} $h={48} $mt={23}>Try Pro For Free</PrimaryButton>
              <Note>You can cancel any time before the end of your 7-day trial.</Note>
            </Card>
          </Plans>
          <Questions>You might have some questions...</Questions>
          <Help>?</Help>
        </Page>
        <VTrack>
          <ScrollArrow turn={0} />
          <VThumb />
          <ScrollArrow turn={180} />
        </VTrack>
        <HTrack>
          <ScrollArrow turn={-90} light />
          <HThumb />
          <ScrollArrow turn={90} />
        </HTrack>
        <Corner />
      </Viewport>

      <Dock>
        <Backdrop />
        {dockApps.map((a, i) => (
          <DockItem key={i} $active={a.active} $running={a.running}>
            <a.icon />
          </DockItem>
        ))}
        <AppsButton>
          {Array.from({ length: 9 }, (_, i) => <AppsDot key={i} />)}
        </AppsButton>
      </Dock>
    </Screen>
  );
}
